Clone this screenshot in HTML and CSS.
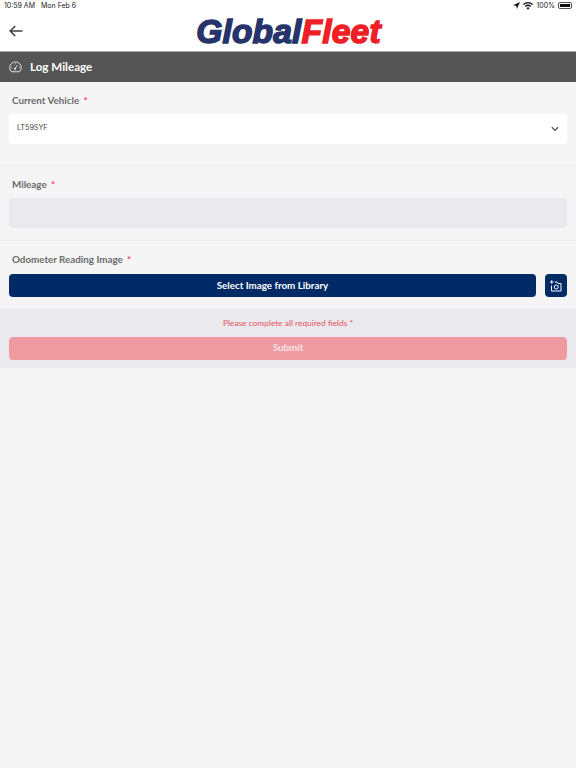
FILE: index.html
```html
<!DOCTYPE html>
<html lang="en">
<head>
    <meta charset="UTF-8">
    <meta name="viewport" content="width=device-width, initial-scale=1.0">
    <title>Log Mileage</title>
    <link rel="stylesheet" href="styles.css">
</head>
<body>
    <div class="status-bar">
        <div class="status-left">
            <span>10:59 AM</span>
            <span>Mon Feb 6</span>
        </div>
        <div class="status-right">
            <svg width="7" height="7" viewBox="0 0 10 10"><path d="M10 0 0 4.6l4.6.8.8 4.6z" fill="#111"/></svg>
            <svg width="10" height="8" viewBox="0 0 20 15"><path d="M10 15 7 11.4a4.6 4.6 0 0 1 6 0zM5.4 9.500 3.600 7.400a10 10 0 0 1 12.800 0L14.600 9.500a7.200 7.200 0 0 0-9.200 0zM2 5.500 0 3.400a15.200 15.200 0 0 1 20 0L18 5.500a12.400 12.400 0 0 0-16 0z" fill="#111"/></svg>
            <span>100%</span>
            <span class="battery"><span class="battery-fill"></span></span>
        </div>
    </div>

    <header class="app-header">
        <svg class="back" width="14" height="12" viewBox="0 0 14 12"><path d="M6.200 1 1.200 6l5 5M1.200 6H13.500" fill="none" stroke="#444" stroke-width="1.600"/></svg>
        <div class="logo"><span class="logo-blue">Global</span><span class="logo-red">Fleet</span></div>
    </header>

    <div class="title-bar">
        <svg width="13" height="12" viewBox="0 0 26 24" fill="none" stroke="#e6e6e6" stroke-width="2"><path d="M5 21.500a11.500 11.500 0 1 1 16 0z"/><path d="M11.500 15.500 17 8.500" /><circle cx="12" cy="16" r="1.500"/><path d="M5 13h1.500M7.500 8l1 1M13 5v1.500M20 13h1.500"/></svg>
        <h1>Log Mileage</h1>
    </div>

    <main>
        <section class="field field-vehicle">
            <label>Current Vehicle <span class="req">*</span></label>
            <div class="select">
                <span>LT59SYF</span>
                <svg width="8" height="6" viewBox="0 0 8 6"><path d="M.8 1.200 4 4.400l3.200-3.200" fill="none" stroke="#444" stroke-width="1.200"/></svg>
            </div>
        </section>

        <section class="field field-mileage">
            <label>Mileage <span class="req">*</span></label>
            <div class="input"></div>
        </section>

        <section class="field field-image">
            <label>Odometer Reading Image <span class="req">*</span></label>
            <div class="image-row">
                <button class="btn-library">Select Image from Library</button>
                <button class="btn-camera">
                    <svg width="12" height="12" viewBox="0 0 24 24" fill="none" stroke="#fff" stroke-width="2"><path d="M0 4h7M3.500 .5v7"/><path d="M10 4h4l2 3h6v15H3V11"/><circle cx="12.500" cy="14" r="4"/></svg>
                </button>
            </div>
        </section>

        <section class="submit-area">
            <p class="warning">Please complete all required fields *</p>
            <button class="btn-submit">Submit</button>
        </section>
    </main>
</body>
</html>
```

FILE: styles.css
```css
* {
    box-sizing: border-box;
}

body {
    margin: 0;
    min-height: 768px;
    background-color: #f5f5f5;
    font-family: Lato, "Liberation Sans", sans-serif;
    color: #333;
}

.status-bar {
    display: flex;
    justify-content: space-between;
    align-items: center;
    height: 11px;
    padding: 0 4px;
    background-color: #fff;
    font-family: Inter, "Liberation Sans", sans-serif;
    font-size: 7px;
    color: #222;
}

.status-left {
    display: flex;
    gap: 6px;
}

.status-right {
    display: flex;
    align-items: center;
    gap: 3px;
}

.battery {
    display: block;
    width: 14px;
    height: 7px;
    padding: 1px;
    border: 1px solid #555;
    border-radius: 2px;
}

.battery-fill {
    display: block;
    height: 100%;
    background-color: #111;
}

.app-header {
    display: flex;
    align-items: center;
    height: 41px;
    padding: 0 9px;
    background-color: #fff;
    border-bottom: 1px solid #aaa;
}

.back {
    flex: none;
}

.logo {
    flex: 1;
    margin-top: 2px;
    margin-right: 13px;
    text-align: center;
    font-family: "Liberation Sans", sans-serif;
    font-size: 33.500px;
    font-weight: bold;
    font-style: italic;
    letter-spacing: 0.2px;
    line-height: 38px;
    -webkit-text-stroke: 1.500px;
}

.logo-blue {
    color: #26346b;
}

.logo-red {
    color: #ee1f26;
}

.title-bar {
    display: flex;
    align-items: center;
    gap: 8px;
    height: 30px;
    padding: 0 9px;
    background-color: #555;
    color: #fff;
}

h1 {
    margin: 0 0 2px;
    font-size: 11.600px;
    font-weight: 700;
}

.field {
    padding: 12px 9px 0;
    border-bottom: 1px solid #eeeeee;
}

.field label {
    display: block;
    margin-left: 3px;
    font-size: 9.800px;
    font-weight: 700;
    line-height: 12px;
    color: #6a6a6a;
}

.req {
    margin-left: 2px;
    color: #f0414b;
}

.field-vehicle {
    height: 84px;
}

.field-mileage {
    height: 75px;
}

.field-image {
    height: 69px;
    border-bottom: 0;
}

.select,
.input {
    height: 30px;
    margin-top: 8px;
    border-radius: 4px;
}

.select {
    display: flex;
    justify-content: space-between;
    align-items: center;
    padding: 0 8px;
    background-color: #fff;
    font-family: Inter, "Liberation Sans", sans-serif;
    font-size: 7.200px;
    color: #444;
}

.select span {
    margin-bottom: 3px;
}

.input {
    background-color: #e9e9ee;
}

.image-row {
    display: flex;
    gap: 9px;
    margin-top: 9px;
}

button {
    border: none;
    font-family: inherit;
}

.btn-library {
    flex: 1;
    height: 23px;
    padding-bottom: 3px;
    border-radius: 4px;
    background-color: #002b66;
    color: #fff;
    font-size: 9.800px;
    font-weight: 700;
}

.btn-camera {
    display: flex;
    align-items: center;
    justify-content: center;
    width: 22px;
    height: 23px;
    padding: 0;
    border-radius: 4px;
    background-color: #002b66;
}

.submit-area {
    height: 59px;
    margin-top: -1px;
    padding: 9px 9px 0;
    background-color: #e9e9ee;
}

.warning {
    margin: 0 0 8px;
    font-size: 8.400px;
    line-height: 11px;
    text-align: center;
    color: #e8525a;
}

.btn-submit {
    display: block;
    width: 100%;
    height: 23px;
    padding-bottom: 4px;
    border-radius: 4px;
    background-color: #ee9aa0;
    color: #f8e4e6;
    font-size: 9.800px;
    font-weight: 700;
}
```
